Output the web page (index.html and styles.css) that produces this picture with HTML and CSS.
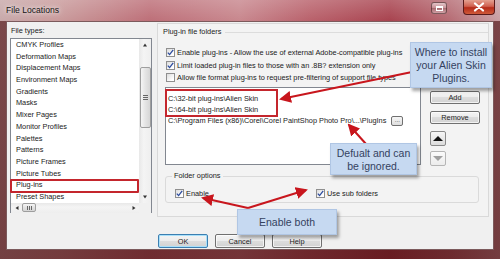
FILE: index.html
```html
<!DOCTYPE html>
<html>
<head>
<meta charset="utf-8">
<link rel="stylesheet" href="styles.css">
</head>
<body>
<div class="window">
  <div class="titlebar">
    <span class="title">File Locations</span>
    <div class="caption-btns">
      <span class="cbtn aux"><span class="aux-ico"></span></span>
      <span class="cbtn close">
        <svg width="12" height="10" viewBox="0 0 12 10"><path d="M2 1.5 L10 8.5 M10 1.5 L2 8.5" stroke="#fff" stroke-width="2.2" stroke-linecap="round"/></svg>
      </span>
    </div>
  </div>
  <div class="client">
    <div class="main">
      <div class="leftcol">
        <div class="lbl">File types:</div>
        <div class="listbox">
          <ul class="items">
            <li>CMYK Profiles</li>
            <li>Deformation Maps</li>
            <li>Displacement Maps</li>
            <li>Environment Maps</li>
            <li>Gradients</li>
            <li>Masks</li>
            <li>Mixer Pages</li>
            <li>Monitor Profiles</li>
            <li>Palettes</li>
            <li>Patterns</li>
            <li>Picture Frames</li>
            <li>Picture Tubes</li>
            <li class="marked">Plug-ins</li>
            <li>Preset Shapes</li>
          </ul>
          <div class="vscroll">
            <span class="sbtn up"></span>
            <span class="vthumb"><span class="grip"></span></span>
            <span class="sbtn down"></span>
          </div>
          <div class="hscroll">
            <span class="sbtn left"></span>
            <span class="hthumb"><span class="hgrip"></span></span>
            <span class="sbtn right"></span>
          </div>
          <div class="corner"></div>
        </div>
      </div>
      <div class="panel">
        <div class="grp-head"><span class="grp-title">Plug-in file folders</span><span class="grp-line"></span></div>
        <div class="checks">
          <div class="chk"><span class="box on"><svg width="9" height="9" viewBox="0 0 9 9"><path d="M1.8 4.6 L3.6 6.6 L7.2 1.8" fill="none" stroke="#2c4b9e" stroke-width="1.3"/></svg></span>Enable plug-ins - Allow the use of external Adobe-compatible plug-ins</div>
          <div class="chk"><span class="box on"><svg width="9" height="9" viewBox="0 0 9 9"><path d="M1.8 4.6 L3.6 6.6 L7.2 1.8" fill="none" stroke="#2c4b9e" stroke-width="1.3"/></svg></span>Limit loaded plug-in files to those with an .8B? extension only</div>
          <div class="chk"><span class="box"></span>Allow file format plug-ins to request pre-filtering of support file types</div>
        </div>
        <div class="folders">
          <div class="pathlist">
            <div class="hl">
              <div class="path">C:\32-bit plug-ins\Alien Skin</div>
              <div class="path">C:\64-bit plug-ins\Alien Skin</div>
            </div>
            <div class="path row">C:\Program Files (x86)\Corel\Corel PaintShop Photo Pro\...\PlugIns<span class="browse">...</span></div>
          </div>
          <div class="sidebtns">
            <span class="btn">Add</span>
            <span class="btn">Remove</span>
            <span class="mbtn"><span class="tri-up"></span></span>
            <span class="mbtn"><span class="tri-down"></span></span>
          </div>
        </div>
        <div class="fopts">
          <span class="legend">Folder options</span>
          <div class="fopt-row">
            <div class="chk"><span class="box on"><svg width="9" height="9" viewBox="0 0 9 9"><path d="M1.8 4.6 L3.6 6.6 L7.2 1.8" fill="none" stroke="#2c4b9e" stroke-width="1.3"/></svg></span>Enable</div>
            <div class="chk"><span class="box on"><svg width="9" height="9" viewBox="0 0 9 9"><path d="M1.8 4.6 L3.6 6.6 L7.2 1.8" fill="none" stroke="#2c4b9e" stroke-width="1.3"/></svg></span>Use sub folders</div>
          </div>
        </div>
      </div>
    </div>
    <div class="buttons">
      <span class="btn dlg default">OK</span>
      <span class="btn dlg">Cancel</span>
      <span class="btn dlg">Help</span>
    </div>
  </div>

  <svg class="arrows" width="500" height="259" viewBox="0 0 500 259">
    <defs>
      <marker id="ah" markerWidth="6" markerHeight="6" refX="5" refY="3" orient="auto" markerUnits="strokeWidth">
        <path d="M0 0 L6 3 L0 6 Z" fill="#c8161d"/>
      </marker>
    </defs>
    <g stroke="#c8161d" stroke-width="2" fill="none" marker-end="url(#ah)">
      <line x1="412" y1="72" x2="281" y2="99"/>
      <line x1="366" y1="144" x2="349" y2="125"/>
      <line x1="248" y1="208" x2="203" y2="198"/>
      <line x1="248" y1="208" x2="306" y2="190"/>
    </g>
  </svg>

  <div class="callout c1">Where to install<br>your Alien Skin<br>Plugins.</div>
  <div class="callout c2">Defualt and can<br>be ignored.</div>
  <div class="callout c3">Enable both</div>
</div>
</body>
</html>
```

FILE: styles.css
```css
* { box-sizing: border-box; }
html, body { margin: 0; padding: 0; }
body {
  width: 500px;
  height: 259px;
  overflow: hidden;
  font-family: "Liberation Sans", Arial, sans-serif;
  font-size: 7.35px;
  color: #1a1a1a;
}
.window {
  position: relative;
  width: 500px;
  height: 259px;
  display: flex;
  flex-direction: column;
  background:
    linear-gradient(180deg, rgba(255,255,255,0.18) 0, rgba(255,255,255,0) 21px, rgba(70,8,10,0.6) 21px, rgba(70,8,10,0.65) 100%),
    linear-gradient(90deg, #c8a9aa 0%, #c99a9b 12%, #bd6f78 30%, #c8878e 48%, #b9616b 62%, #a8434f 78%, #b66c74 90%, #c9a0a4 100%);
}
.titlebar {
  height: 21px;
  flex: none;
  display: flex;
  align-items: flex-start;
  padding: 0 5px 0 6px;
}
.title {
  font-family: "Liberation Sans", Arial, sans-serif;
  font-size: 8.6px;
  line-height: 20px;
  color: #151515;
  text-shadow: 0 0 4px rgba(255,255,255,0.9), 0 0 8px rgba(255,255,255,0.7);
}
.caption-btns {
  margin-left: auto;
  display: flex;
  align-items: flex-start;
  gap: 16px;
}
.cbtn {
  display: flex;
  align-items: center;
  justify-content: center;
}
.cbtn.aux {
  width: 16px;
  height: 12px;
  margin-top: 2px;
  border: 1px solid rgba(60,30,30,0.6);
  border-radius: 3px;
  background: linear-gradient(180deg, rgba(255,255,255,0.55), rgba(255,255,255,0.2) 50%, rgba(120,80,80,0.3) 51%, rgba(255,255,255,0.35));
}
.aux-ico {
  width: 7px;
  height: 5px;
  border: 1px solid #fff;
  border-top-width: 2px;
}
.cbtn.close {
  width: 32px;
  height: 15px;
  border: 1px solid #5a1a1a;
  border-top: none;
  border-radius: 0 0 4px 4px;
  background: linear-gradient(180deg, #e4a090 0%, #d0604f 45%, #b52a18 55%, #cf5a3a 100%);
}
.client {
  height: 229px;
  margin: 0 6px;
  background: #f0f0f0;
  border: 1px solid #7c5a5c;
  display: flex;
  flex-direction: column;
  padding: 0 4px 0 3px;
}
.main {
  display: flex;
  gap: 5px;
  height: 195px;
}
.leftcol {
  width: 142px;
  padding-top: 3px;
}
.lbl {
  line-height: 11px;
  padding-left: 1px;
}
.listbox {
  margin-top: 2px;
  height: 175px;
  border: 1px solid #828790;
  background: #fff;
  display: grid;
  grid-template-columns: 1fr 12px;
  grid-template-rows: 1fr 10px;
}
.items {
  list-style: none;
  margin: 0;
  padding: 0 0 0 5px;
}
.items li {
  height: 11.7px;
  line-height: 11.7px;
  white-space: nowrap;
}
.items li.marked { position: relative; }
.items li.marked::after {
  content: "";
  position: absolute;
  left: -6px;
  right: 0;
  top: 0;
  bottom: -2px;
  border: 2px solid #c4262d;
  border-radius: 1px;
}
.vscroll {
  background: linear-gradient(90deg, #e8e8e8, #f4f4f4 40%, #eeeeee);
  display: flex;
  flex-direction: column;
  align-items: center;
}
.sbtn {
  position: relative;
  width: 12px;
  height: 12px;
  flex: none;
}
.sbtn::before {
  content: "";
  position: absolute;
  left: 50%;
  top: 50%;
  width: 0;
  height: 0;
}
.sbtn.up::before { border: 2px solid transparent; border-bottom: 3px solid #333; border-top: 0; transform: translate(-50%, -50%); }
.sbtn.down::before { border: 2px solid transparent; border-top: 3px solid #333; border-bottom: 0; transform: translate(-50%, -50%); }
.sbtn.left::before { border: 2px solid transparent; border-right: 3px solid #333; border-left: 0; transform: translate(-50%, -50%); }
.sbtn.right::before { border: 2px solid transparent; border-left: 3px solid #333; border-right: 0; transform: translate(-50%, -50%); }
.vthumb {
  margin-top: 16px;
  width: 11px;
  height: 61px;
  border: 1px solid #9e9e9e;
  border-radius: 2px;
  background: linear-gradient(90deg, #f5f5f5, #e4e4e4 50%, #d6d6d6);
  display: flex;
  align-items: center;
  justify-content: center;
}
.grip {
  width: 5px;
  height: 5px;
  background: repeating-linear-gradient(180deg, #666 0 1px, transparent 1px 2px);
}
.vscroll .down { margin-top: auto; }
.hscroll {
  background: linear-gradient(180deg, #e8e8e8, #f4f4f4 40%, #eeeeee);
  display: flex;
  align-items: center;
}
.hscroll .sbtn { height: 10px; width: 11px; }
.hthumb {
  width: 14px;
  height: 9px;
  border: 1px solid #9e9e9e;
  border-radius: 2px;
  background: linear-gradient(180deg, #f5f5f5, #e2e2e2 50%, #d6d6d6);
  display: flex;
  align-items: center;
  justify-content: center;
}
.hgrip {
  width: 5px;
  height: 4px;
  background: repeating-linear-gradient(90deg, #666 0 1px, transparent 1px 2px);
}
.hscroll .right { margin-left: auto; }
.corner { background: #f0f0f0; }

.panel {
  width: 332px;
  margin-top: 1px;
  height: 194px;
  border: 1px solid #d9d9d9;
  background: #f3f3f3;
  padding-top: 2px;
  display: flex;
  flex-direction: column;
}
.grp-head {
  display: flex;
  align-items: center;
  padding-left: 5px;
  height: 11px;
}
.grp-title { line-height: 11px; white-space: nowrap; }
.grp-line {
  flex: 1;
  height: 1px;
  margin: 2px 0 0 4px;
  background: #dcdcdc;
}
.checks {
  margin-top: 9.5px;
  padding-left: 8px;
}
.chk {
  display: flex;
  align-items: center;
  height: 12.5px;
  white-space: nowrap;
}
.box {
  width: 9px;
  height: 9px;
  flex: none;
  margin-right: 2px;
  border: 1px solid #8f8f8f;
  background: linear-gradient(135deg, #dcdcdc, #ffffff 80%);
  position: relative;
}
.box svg {
  position: absolute;
  left: -1px;
  top: -1px;
}
.folders {
  display: flex;
  gap: 9px;
  margin-top: 2.5px;
  padding-left: 7px;
}
.pathlist {
  width: 256px;
  height: 78px;
  border: 1px solid #828790;
  background: #fff;
  padding: 5.5px 0 0 2px;
}
.path {
  line-height: 11px;
  height: 11px;
  white-space: nowrap;
}
.hl { position: relative; }
.hl::after {
  content: "";
  position: absolute;
  left: -3px;
  top: -4.5px;
  width: 109px;
  bottom: -1.5px;
  border: 2px solid #c4262d;
}
.path.row {
  display: flex;
  align-items: center;
  gap: 5px;
}
.browse {
  width: 12px;
  height: 10px;
  border: 1px solid #707070;
  border-radius: 2px;
  background: linear-gradient(180deg, #f6f6f6, #dedede);
  font-size: 6px;
  line-height: 6px;
  text-align: center;
}
.sidebtns {
  display: flex;
  flex-direction: column;
  align-items: flex-start;
  padding-top: 4px;
}
.btn {
  display: flex;
  align-items: center;
  justify-content: center;
  width: 50px;
  height: 13px;
  border: 1px solid #707070;
  border-radius: 2px;
  background: linear-gradient(180deg, #f4f4f4 0%, #ececec 48%, #dddddd 50%, #d2d2d2 100%);
  box-shadow: inset 0 0 0 1px rgba(255,255,255,0.7);
  color: #1e1e1e;
}
.sidebtns .btn + .btn { margin-top: 7px; }
.mbtn {
  width: 16px;
  height: 15px;
  margin-top: 7px;
  border: 1px solid #8a8a8a;
  border-radius: 2px;
  background: linear-gradient(180deg, #f6f6f6, #dcdcdc);
  display: flex;
  align-items: center;
  justify-content: center;
}
.mbtn + .mbtn { margin-top: 5px; border-color: #b5b5b5; background: linear-gradient(180deg, #fbfbfb, #ececec); }
.tri-up { width: 0; height: 0; border: 5px solid transparent; border-bottom: 5px solid #111; border-top: 0; }
.tri-down { width: 0; height: 0; border: 5px solid transparent; border-top: 5px solid #a0a0a0; border-bottom: 0; }
.fopts {
  margin: 10px 9px 0 7px;
  height: 27px;
  border: 1px solid #dadada;
  border-radius: 3px;
  padding: 0 9px;
}
.legend {
  display: inline-block;
  margin: -6.5px 0 0 -3px;
  padding: 0 2px;
  line-height: 11px;
  background: #f3f3f3;
  vertical-align: top;
}
.fopt-row {
  display: grid;
  grid-template-columns: 141px auto;
  margin-top: 2px;
}
.buttons {
  display: flex;
  gap: 7px;
  margin-top: 17px;
  padding-left: 148px;
}
.btn.dlg { height: 14px; }
.btn.default {
  border-color: #3c7fb1;
  box-shadow: inset 0 0 0 1px #a8e0fa;
}
.arrows {
  position: absolute;
  left: 0;
  top: 0;
  pointer-events: none;
}
.callout {
  position: absolute;
  background: #c6d9f1;
  border: 1px solid #b0c6e4;
  box-shadow: 2px 3px 3px rgba(0,0,0,0.35);
  color: #34425f;
  font-family: "Liberation Sans", Arial, sans-serif;
  font-size: 10.5px;
  line-height: 13px;
  text-align: center;
}
.c1 { left: 410px; top: 42px; width: 82px; height: 46px; padding-top: 3px; }
.c2 { left: 330px; top: 143px; width: 87px; height: 32px; padding-top: 3px; }
.c3 { left: 237px; top: 209px; width: 100px; height: 26px; padding-top: 6px; }
```
